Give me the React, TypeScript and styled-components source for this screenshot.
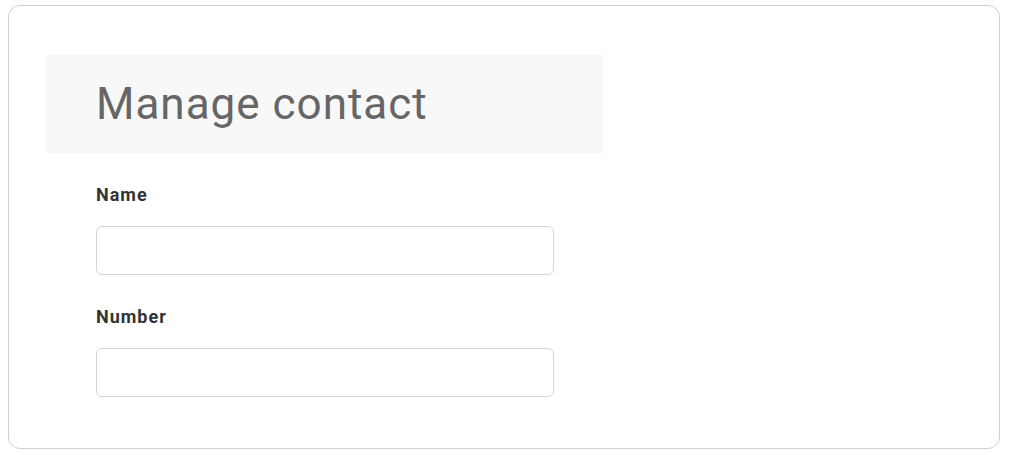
import React from "react";
import styled, { createGlobalStyle } from "styled-components";

const Global = createGlobalStyle`
  html, body { margin: 0; padding: 0; background: #ffffff; }
  body { font-family: Roboto, "Liberation Sans", sans-serif; }
  * { box-sizing: border-box; }
`;

const Card = styled.div`
  margin: 5px 9px 0 8px;
  height: 444px;
  border: 1px solid #cfcfcf;
  border-radius: 12px;
  padding: 49px 37px 0 37px;
  background: #fff;
`;

const Form = styled.form`
  width: 557px;
  display: flex;
  flex-direction: column;
`;

const Header = styled.div`
  height: 98px;
  background: #f8f8f8;
  display: flex;
  align-items: center;
  padding: 0 50px;
`;

const Title = styled.h1`
  margin: 0;
  font-family: Roboto, "Liberation Sans", sans-serif;
  font-weight: 400;
  font-size: 44px;
  letter-spacing: 1px;
  line-height: 1;
  color: #666666;
`;

const Field = styled.div`
  display: flex;
  flex-direction: column;
  padding: 32px 49px 0 50px;
`;

const Label = styled.label`
  display: block;
  height: 19px;
  font-family: Roboto, "Liberation Sans", sans-serif;
  font-weight: 700;
  font-size: 18px;
  letter-spacing: 1px;
  line-height: 19px;
  color: #333333;
  margin-bottom: 22px;
`;

const Input = styled.input`
  display: block;
  height: 49px;
  width: 100%;
  border: 1px solid #d4d4d4;
  border-radius: 6px;
  background: #fff;
  padding: 0 12px;
  font-family: Roboto, "Liberation Sans", sans-serif;
  font-size: 16px;
  outline: none;
`;

export default function App() {
  return (
    <>
      <Global />
      <Card>
        <Form onSubmit={(e) => e.preventDefault()}>
          <Header>
            <Title>Manage contact</Title>
          </Header>
          <Field>
            <Label htmlFor="name">Name</Label>
            <Input id="name" type="text" />
          </Field>
          <Field>
            <Label htmlFor="number">Number</Label>
            <Input id="number" type="text" />
          </Field>
        </Form>
      </Card>
    </>
  );
}
